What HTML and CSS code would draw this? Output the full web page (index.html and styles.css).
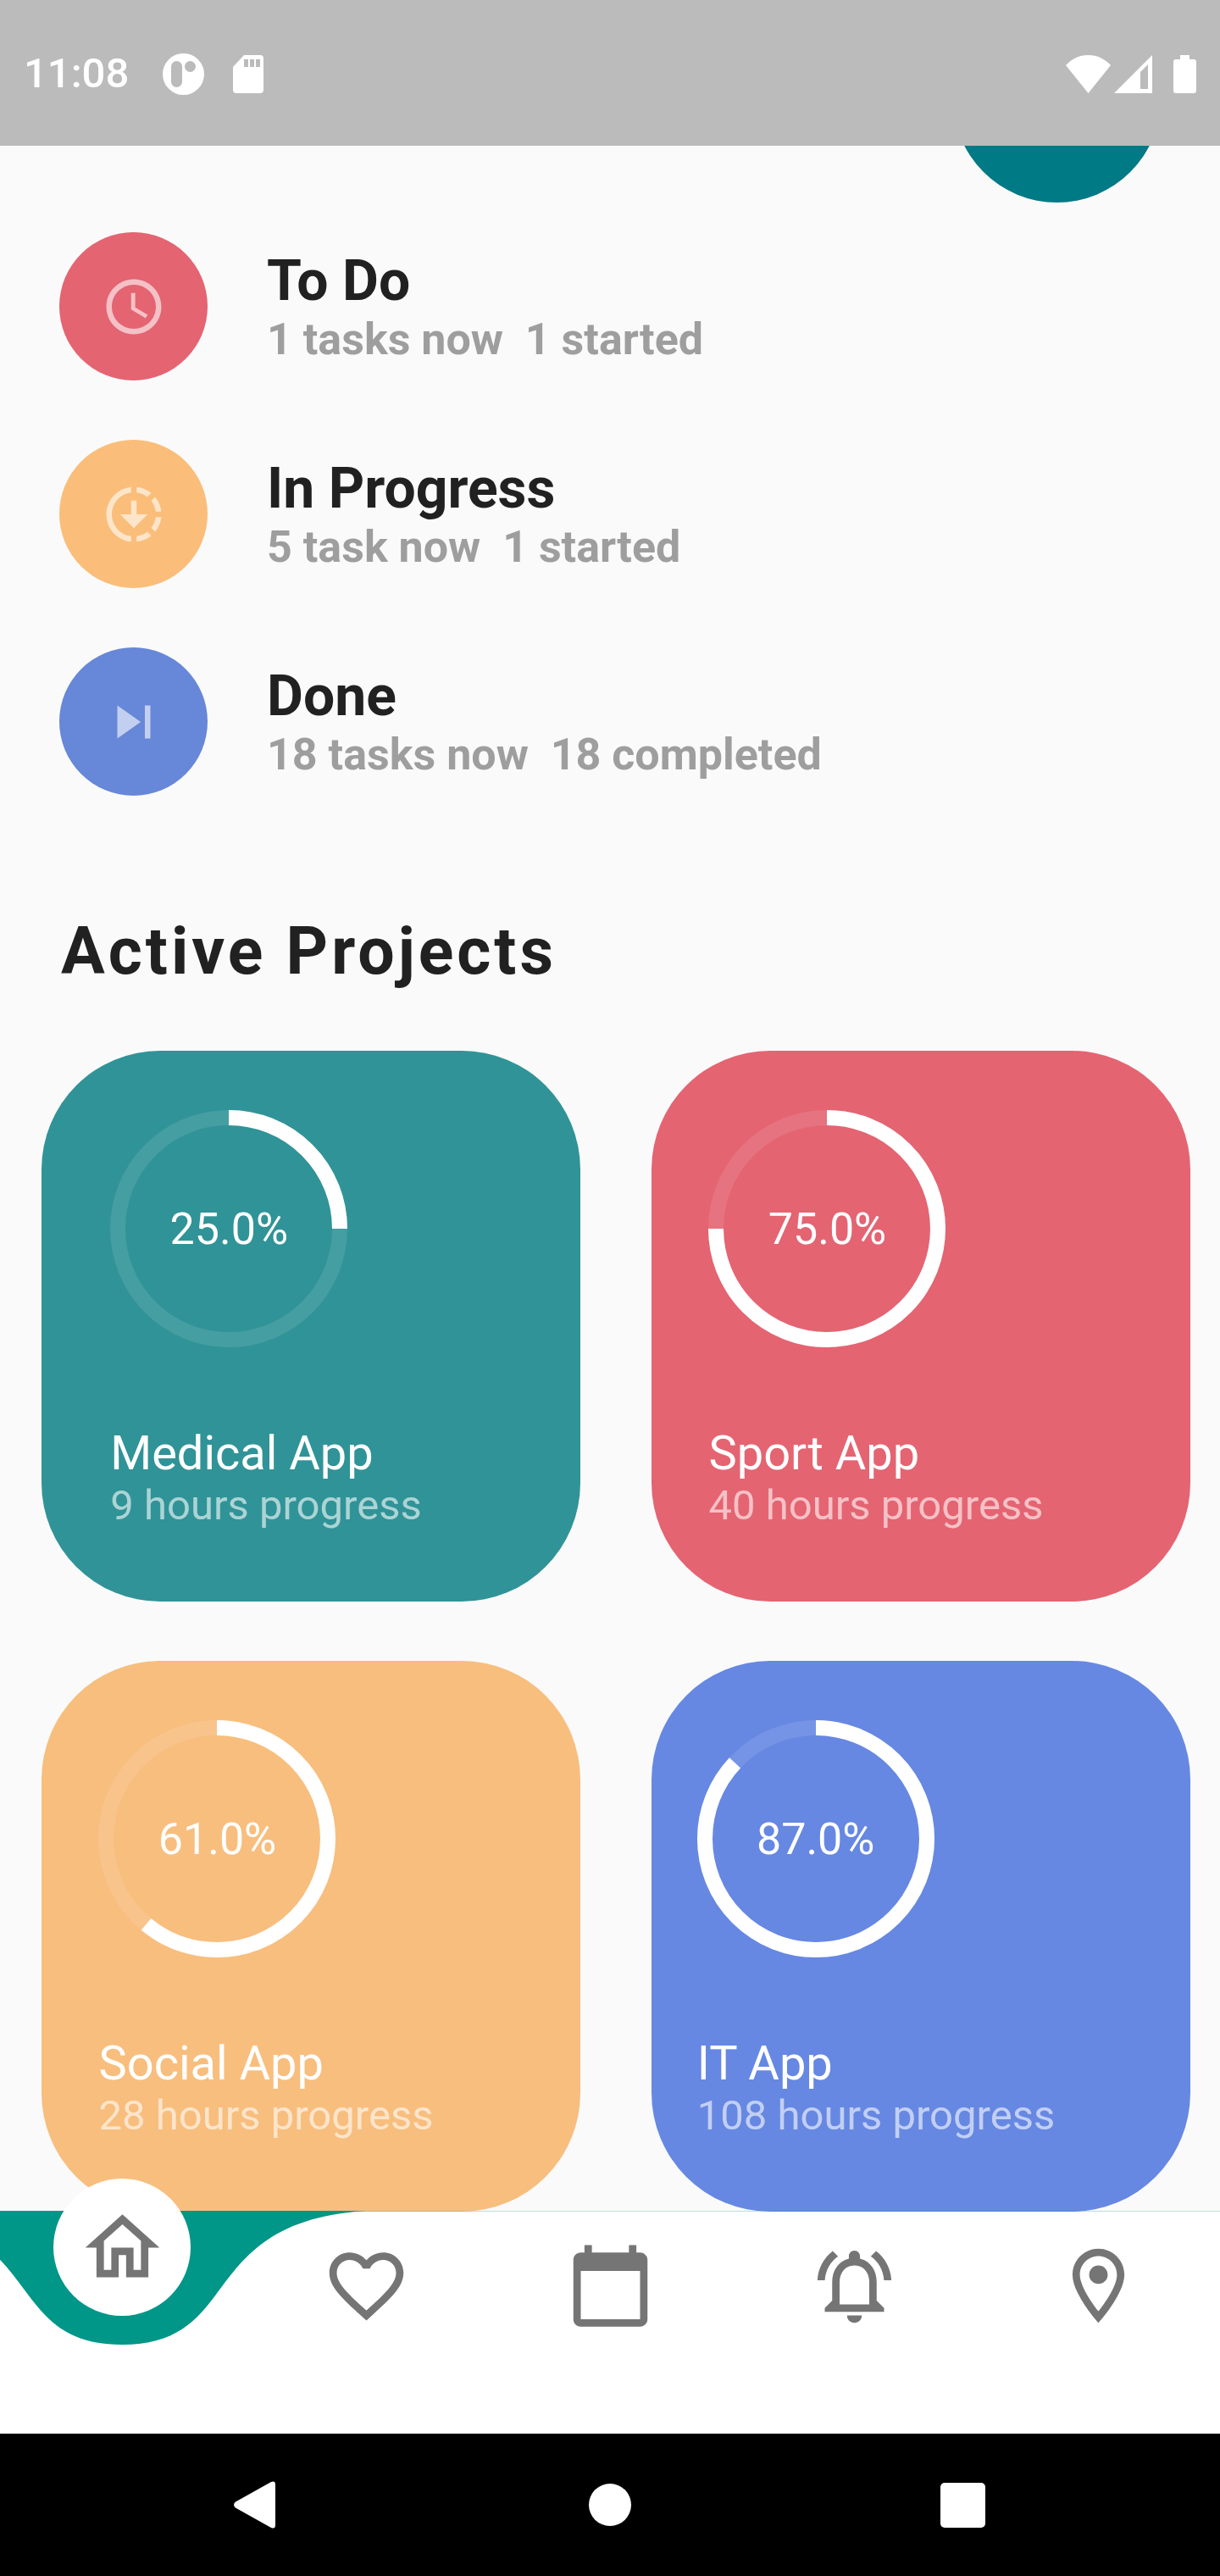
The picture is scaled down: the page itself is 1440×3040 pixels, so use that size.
FILE: index.html
```html
<!DOCTYPE html>
<html lang="en">
<head>
<meta charset="utf-8">
<meta name="viewport" content="width=device-width, initial-scale=1">
<title>Tasks</title>
<link rel="stylesheet" href="styles.css">
</head>
<body>
<header class="status">
  <div class="status-left">
    <time class="clock">11:08</time>
    <svg class="status-app" width="49" height="49" viewBox="0 0 49 49" aria-hidden="true"><path fill-rule="evenodd" d="M24.500 0a24.500 24.500 0 1 0 0 49a24.500 24.500 0 1 0 0-49zM16.500 9a6.500 6.500 0 0 1 6.500 6.500v18a6.500 6.500 0 0 1-13 0v-18a6.500 6.500 0 0 1 6.500-6.500zM32.500 9a6.500 6.500 0 1 1 0 13a6.500 6.500 0 1 1 0-13z"/></svg>
    <svg width="36" height="45" viewBox="0 0 36 45" aria-hidden="true"><path fill-rule="evenodd" d="M13 0h19a4 4 0 0 1 4 4v37a4 4 0 0 1-4 4H4a4 4 0 0 1-4-4V14zM13 5v9h5V5zM20 5v9h5V5zM27 5v9h5V5z"/></svg>
  </div>
  <div class="status-right">
    <svg width="53" height="45" viewBox="0 0 53 45" aria-hidden="true"><path d="M0 12C7 4.500 16 0 26.500 0S46 4.500 53 12L26.500 45z"/></svg>
    <svg width="45" height="45" viewBox="0 0 45 45" aria-hidden="true"><path fill-rule="evenodd" d="M0 45L45 0v45zM31 20v20h9V11z"/></svg>
    <svg class="battery" width="27" height="45" viewBox="0 0 27 45" aria-hidden="true"><path d="M8 0h11v5h5a3 3 0 0 1 3 3v34a3 3 0 0 1-3 3H3a3 3 0 0 1-3-3V8a3 3 0 0 1 3-3h5z"/></svg>
  </div>
</header>

<main class="content">
  <button class="calendar-button" type="button" aria-label="Open calendar"></button>

  <ul class="tasks">
    <li class="task">
      <span class="task-icon red"><svg viewBox="0 0 24 24" aria-hidden="true"><path d="M11.990 2C6.470 2 2 6.480 2 12s4.470 10 9.990 10C17.520 22 22 17.520 22 12S17.520 2 11.990 2zM12 20c-4.420 0-8-3.580-8-8s3.580-8 8-8 8 3.580 8 8-3.580 8-8 8zm.5-13H11v6l5.250 3.150.75-1.230-4.500-2.670z"/></svg></span>
      <div><h3 class="task-title">To Do</h3><p class="task-note">1 tasks now  1 started</p></div>
    </li>
    <li class="task">
      <span class="task-icon yellow"><svg viewBox="0 0 24 24" aria-hidden="true"><path d="M18.320 4.260C16.840 3.050 15.010 2.250 13 2.050v2.020c1.460.18 2.790.76 3.900 1.620zM19.930 11h2.020c-.2-2.010-1-3.840-2.210-5.320L18.310 7.100c.86 1.110 1.440 2.440 1.620 3.900zM18.310 16.900l1.430 1.430c1.210-1.480 2.010-3.320 2.210-5.320h-2.020c-.18 1.450-.76 2.780-1.620 3.890zM13 19.930v2.020c2.010-.2 3.840-1 5.320-2.210l-1.430-1.430c-1.100.86-2.430 1.440-3.890 1.620zM11 19.930v2.020c-5.050-.5-9-4.760-9-9.950s3.950-9.450 9-9.950v2.020C7.050 4.560 4 7.920 4 12s3.050 7.440 7 7.930zM11 7h2v5h4l-5 5-5-5h4z"/></svg></span>
      <div><h3 class="task-title">In Progress</h3><p class="task-note">5 task now  1 started</p></div>
    </li>
    <li class="task">
      <span class="task-icon blue"><svg viewBox="0 0 24 24" aria-hidden="true"><path d="M6 18l8.500-6L6 6v12zM16 6v12h2V6h-2z"/></svg></span>
      <div><h3 class="task-title">Done</h3><p class="task-note">18 tasks now  18 completed</p></div>
    </li>
  </ul>

  <h2 class="heading">Active Projects</h2>

  <section class="projects" aria-label="Active Projects">
    <article class="card card-green">
      <div class="card-body">
        <div class="ring"><svg viewBox="0 0 280 280" aria-hidden="true"><circle class="track" cx="140" cy="140" r="131"/><circle class="bar" cx="140" cy="140" r="131" pathLength="100" stroke-dasharray="25 75"/></svg><span>25.0%</span></div>
        <h3 class="card-title">Medical App</h3>
        <p class="card-note">9 hours progress</p>
      </div>
    </article>
    <article class="card card-red">
      <div class="card-body">
        <div class="ring"><svg viewBox="0 0 280 280" aria-hidden="true"><circle class="track" cx="140" cy="140" r="131"/><circle class="bar" cx="140" cy="140" r="131" pathLength="100" stroke-dasharray="75 25"/></svg><span>75.0%</span></div>
        <h3 class="card-title">Sport App</h3>
        <p class="card-note">40 hours progress</p>
      </div>
    </article>
    <article class="card card-yellow">
      <div class="card-body">
        <div class="ring"><svg viewBox="0 0 280 280" aria-hidden="true"><circle class="track" cx="140" cy="140" r="131"/><circle class="bar" cx="140" cy="140" r="131" pathLength="100" stroke-dasharray="61 39"/></svg><span>61.0%</span></div>
        <h3 class="card-title">Social App</h3>
        <p class="card-note">28 hours progress</p>
      </div>
    </article>
    <article class="card card-blue">
      <div class="card-body">
        <div class="ring"><svg viewBox="0 0 280 280" aria-hidden="true"><circle class="track" cx="140" cy="140" r="131"/><circle class="bar" cx="140" cy="140" r="131" pathLength="100" stroke-dasharray="87 13"/></svg><span>87.0%</span></div>
        <h3 class="card-title">IT App</h3>
        <p class="card-note">108 hours progress</p>
      </div>
    </article>
  </section>
</main>

<nav class="tabs" aria-label="Main">
  <a class="tab tab-active" href="#home" aria-label="Home" aria-current="page">
    <svg class="notch" viewBox="0 0 576 158" preserveAspectRatio="none" aria-hidden="true"><path d="M0 0C202 13 144 158 288 158S374 13 576 0z"/></svg>
    <span class="bubble"><svg class="icon" viewBox="0 0 24 24" aria-hidden="true"><path d="M12 5.690l5 4.500V18h-2v-6H9v6H7v-7.810l5-4.500M12 3L2 12h3v8h6v-6h2v6h6v-8h3L12 3z"/></svg></span>
  </a>
  <a class="tab" href="#favorites" aria-label="Favorites"><svg class="icon" viewBox="0 0 24 24" aria-hidden="true"><path d="M16.500 3c-1.740 0-3.410.81-4.500 2.090C10.910 3.810 9.240 3 7.500 3 4.420 3 2 5.420 2 8.500c0 3.780 3.400 6.860 8.550 11.540L12 21.350l1.450-1.320C18.600 15.360 22 12.280 22 8.500 22 5.420 19.580 3 16.500 3zm-4.400 15.550l-.1.1-.1-.1C7.140 14.240 4 11.390 4 8.500 4 6.500 5.500 5 7.500 5c1.540 0 3.040.99 3.570 2.360h1.870C13.460 5.990 14.960 5 16.500 5c2 0 3.500 1.500 3.500 3.500 0 2.890-3.140 5.740-7.900 10.050z"/></svg></a>
  <a class="tab" href="#calendar" aria-label="Calendar"><svg class="icon" viewBox="0 0 24 24" aria-hidden="true"><path d="M20 3h-1V1h-2v2H7V1H5v2H4c-1.100 0-2 .9-2 2v16c0 1.100.9 2 2 2h16c1.100 0 2-.9 2-2V5c0-1.100-.9-2-2-2zm0 18H4V8h16v13z"/></svg></a>
  <a class="tab" href="#alerts" aria-label="Alerts"><svg class="icon" viewBox="0 0 24 24" aria-hidden="true"><path d="M12 22c1.100 0 2-.9 2-2h-4c0 1.100.9 2 2 2zM18 16v-5c0-3.070-1.630-5.640-4.500-6.320V4c0-.83-.67-1.500-1.500-1.500s-1.500.67-1.500 1.500v.68C7.640 5.360 6 7.920 6 11v5l-2 2v1h16v-1l-2-2zm-2 1H8v-6c0-2.480 1.510-4.500 4-4.500s4 2.020 4 4.500v6zM7.580 4.080L6.150 2.650C3.750 4.480 2.170 7.300 2.030 10.500h2c.15-2.650 1.510-4.970 3.550-6.420zm12.390 6.420h2c-.15-3.200-1.730-6.020-4.120-7.850l-1.420 1.430c2.020 1.450 3.390 3.770 3.540 6.420z"/></svg></a>
  <a class="tab" href="#places" aria-label="Places"><svg class="icon" viewBox="0 0 24 24" aria-hidden="true"><path d="M12 2C8.130 2 5 5.130 5 9c0 5.250 7 13 7 13s7-7.750 7-13c0-3.870-3.130-7-7-7zM7 9c0-2.760 2.240-5 5-5s5 2.240 5 5c0 2.880-2.880 7.190-5 9.880C9.920 16.210 7 11.850 7 9z"/><circle cx="12" cy="9" r="2.500"/></svg></a>
</nav>

<footer class="system">
  <button class="system-button" type="button" aria-label="Back"><svg width="56" height="56" viewBox="0 0 56 56" aria-hidden="true"><path d="M2 24.500L44 1Q49 -1 49 4V52Q49 57 44 55L2 31.500Q-2 28 2 24.500z"/></svg></button>
  <button class="system-button" type="button" aria-label="Home screen"><svg width="50" height="50" viewBox="0 0 50 50" aria-hidden="true"><circle cx="25" cy="25" r="25"/></svg></button>
  <button class="system-button" type="button" aria-label="Recent apps"><svg width="53" height="53" viewBox="0 0 53 53" aria-hidden="true"><rect width="53" height="53" rx="5"/></svg></button>
</footer>
</body>
</html>
```
FILE: styles.css
```css
* { box-sizing: border-box; }

body {
  margin: 0;
  min-height: 100vh;
  display: flex;
  flex-direction: column;
  background: #fafafa;
  color: #212121;
  font-family: Roboto, "Liberation Sans", sans-serif;
}

h2, h3, p, ul { margin: 0; padding: 0; }

svg { display: block; }

/* Status bar */
.status {
  height: 172px;
  padding: 2px 28px 0;
  display: flex;
  align-items: center;
  justify-content: space-between;
  background: #bbb;
  color: #fff;
  fill: #fff;
}

.status-left, .status-right { display: flex; align-items: center; }
.clock { font-size: 49px; line-height: 58px; font-weight: 500; }
.status-app { margin: 0 34px 0 40px; }
.status-right { gap: 4px; }
.battery { margin-left: 21px; }

/* Scrolling content */
.content {
  position: relative;
  flex: 1;
  padding-top: 102px;
  overflow: clip;
}

.calendar-button {
  position: absolute;
  top: -178px;
  right: 70px;
  width: 245px;
  height: 245px;
  border: 0;
  border-radius: 50%;
  background: #007a85;
}

.tasks {
  padding: 0 70px;
  display: flex;
  flex-direction: column;
  gap: 70px;
  list-style: none;
}

.task { display: flex; align-items: center; gap: 70px; }

.task-icon {
  flex: none;
  width: 175px;
  height: 175px;
  border-radius: 50%;
  display: grid;
  place-items: center;
  fill: rgba(255, 255, 255, .6);
}

.task-icon svg { width: 78px; height: 78px; }
.red { background: #e46472; }
.yellow { background: #fabe7a; }
.blue { background: #6787d8; }

.task-title { font-size: 66px; line-height: 79px; font-weight: 700; }

.task-note {
  font-size: 52px;
  line-height: 60px;
  font-weight: 700;
  color: #9e9e9e;
  white-space: pre-wrap;
}

.heading {
  margin: 139px 72px 72px;
  font-size: 77px;
  line-height: 90px;
  font-weight: 700;
  letter-spacing: 4px;
}

/* Project cards */
.projects {
  padding: 0 35px 0 49px;
  display: grid;
  grid-template-columns: 1fr 1fr;
  gap: 70px 84px;
}

.card {
  padding: 70px 106px 85px 0;
  border-radius: 140px;
  display: flex;
  justify-content: center;
  color: #fff;
}

.card-green { background: #309397; }
.card-red { background: #e46472; }
.card-yellow { background: #f8be7e; }
.card-blue { background: #6688e2; }

.ring {
  width: 280px;
  height: 280px;
  margin-bottom: 92px;
  display: grid;
  place-items: center;
  font-size: 52px;
  line-height: 61px;
}

.ring > * { grid-area: 1 / 1; }
.ring circle { fill: none; stroke: #fff; stroke-width: 18; }
.ring .track { stroke-opacity: .1; }
.ring .bar { transform: rotate(-90deg); transform-origin: center; }

.card-title { font-size: 56px; line-height: 66px; font-weight: 400; }

.card-note {
  font-size: 49px;
  line-height: 57px;
  color: rgba(255, 255, 255, .6);
}

/* Tab bar */
.tabs {
  position: relative;
  height: 262px;
  display: grid;
  grid-template-columns: repeat(5, 1fr);
  overflow-x: clip;
  background: #fff;
  box-shadow: 0 -1px rgba(0, 150, 136, .25);
  fill: #757575;
}

.tab {
  position: relative;
  padding-top: 35px;
  display: flex;
  justify-content: center;
  align-items: flex-start;
}

.icon { width: 105px; height: 105px; }

.notch {
  position: absolute;
  top: -1px;
  left: -50%;
  width: 200%;
  height: 158px;
  fill: #009688;
}

.bubble {
  position: absolute;
  top: -39px;
  width: 162px;
  height: 162px;
  border-radius: 50%;
  display: grid;
  place-items: center;
  background: #fff;
}

/* System navigation */
.system {
  height: 168px;
  padding: 0 96px;
  display: grid;
  grid-template-columns: repeat(3, 1fr);
  background: #000;
}

.system-button {
  padding: 0;
  border: 0;
  display: grid;
  place-items: center;
  background: none;
  fill: #fff;
}
```
